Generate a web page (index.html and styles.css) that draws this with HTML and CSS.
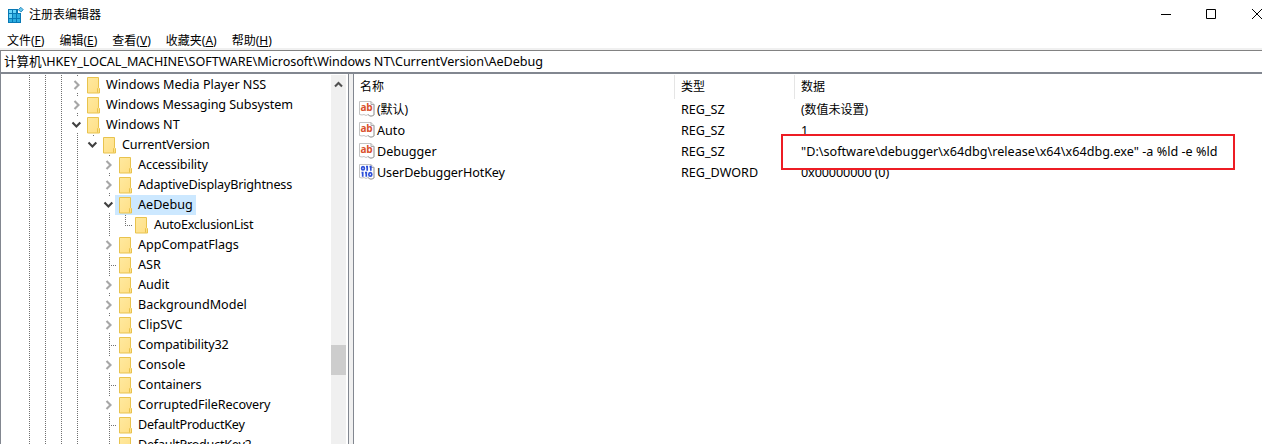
FILE: index.html
```html
<!DOCTYPE html>
<html lang="zh-CN">
<head>
<meta charset="utf-8">
<title>注册表编辑器</title>
<link rel="stylesheet" href="styles.css">
</head>
<body>
<svg width="0" height="0" class="defs">
  <defs>
    <linearGradient id="fg" x1="0" y1="0" x2="1" y2="1"><stop offset="0" stop-color="#ffe99f"/><stop offset="1" stop-color="#ffdf85"/></linearGradient>
    <symbol id="folder" viewBox="0 0 14 17"><path d="M.5.5h11v10l1 1v4.500h-12z" fill="url(#fg)" stroke="#e8c34e"/><path d="M10.500 15.500v-4l1-1" fill="none" stroke="#e8c34e"/></symbol>
    <symbol id="page" viewBox="0 0 16 16"><path d="M.5 13.500V.5h11.500l3 3v10.500l-2 1h-2l-2-1.500-2 1-2-1-2 .5z" fill="#fff" stroke="#c4c4c4"/><path d="M12 .5v3h3v10.500l-2 1h-2l-2-1.500" fill="none" stroke="#a8a8a8"/></symbol>
    <symbol id="ab" viewBox="0 0 16 16"><use href="#page"/><text x="1.600" y="10" class="ab-text">ab</text></symbol>
    <symbol id="bin" viewBox="0 0 16 16"><use href="#page"/><g fill="none" stroke="#2d4fd8" stroke-width="1.700"><ellipse cx="4" cy="4.300" rx="1.400" ry="1.700"/><path d="M7 2.700h1.200v4M10.500 2.700h1.300v4M2.500 8.700h1.200v4M6 8.700h1.300v4"/><ellipse cx="11.300" cy="10.400" rx="1.500" ry="1.700"/></g></symbol>
    <symbol id="right" viewBox="0 0 16 20"><path d="M5.500 6l4 4-4 4" fill="none" stroke="#a6a6a6" stroke-width="2.100"/></symbol>
    <symbol id="down" viewBox="0 0 16 20"><path d="M3.500 7.500l3.900 3.900 3.900-3.900" fill="none" stroke="#404040" stroke-width="2.100"/></symbol>
  </defs>
</svg>
<div class="window">
  <header class="titlebar">
    <svg class="app-icon" width="16" height="16" viewBox="0 0 16 16"><path d="M0 2h10v4h3v10H0z" fill="#0878b4"/><path d="M1 3h3v3H1zM5 3h3v3H5zM1 7h3v4H1z" fill="#6ad4f8"/><path d="M5 7h3v4H5zM1 12h3v3H1zM9 7h3v4H9zM5 12h3v3H5zM9 12h3v3H9z" fill="#2cacdf"/><path d="M12.800.3l2.400 2.400-2.400 2.400-2.400-2.400z" fill="#6cc8ee" stroke="#2589bd"/></svg>
    <span class="title">注册表编辑器</span>
    <svg class="controls" width="106" height="14" viewBox="0 0 106 14" fill="none" stroke="#000"><path d="M5 7.500h10M50.500 2.500h9v9h-9zM96 2l10 10M106 2L96 12"/></svg>
  </header>
  <nav class="menu"><span>文件(<u>F</u>)</span><span>编辑(<u>E</u>)</span><span>查看(<u>V</u>)</span><span>收藏夹(<u>A</u>)</span><span>帮助(<u>H</u>)</span></nav>
  <div class="address">计算机\HKEY_LOCAL_MACHINE\SOFTWARE\Microsoft\Windows NT\CurrentVersion\AeDebug</div>
  <main class="panes">
    <section class="tree-pane">
      <div class="tree" id="tree"></div>
      <div class="scrollbar"><svg width="15" height="20" viewBox="0 0 15 20"><path d="M4 11.500l3.500-3.500 3.500 3.500" fill="none" stroke="#505050" stroke-width="2.100"/></svg><div class="thumb"></div></div>
    </section>
    <div class="splitter"></div>
    <section class="values">
      <div class="row head"><span class="name">名称</span><span class="type">类型</span><span class="data">数据</span></div>
      <div class="row"><span class="name cjk"><svg><use href="#ab"/></svg>(默认)</span><span class="type">REG_SZ</span><span class="data cjk">(数值未设置)</span></div>
      <div class="row"><span class="name"><svg><use href="#ab"/></svg>Auto</span><span class="type">REG_SZ</span><span class="data">1</span></div>
      <div class="row"><span class="name"><svg><use href="#ab"/></svg>Debugger</span><span class="type">REG_SZ</span><span class="data marked"><b class="callout">"D:\software\debugger\x64dbg\release\x64\x64dbg.exe" -a %ld -e %ld</b></span></div>
      <div class="row"><span class="name tight"><svg><use href="#bin"/></svg>UserDebuggerHotKey</span><span class="type">REG_DWORD</span><span class="data tight">0x00000000 (0)</span></div>
    </section>
  </main>
</div>
<script src="tree.js"></script>
</body>
</html>
```
FILE: styles.css
```css
* { box-sizing: border-box; }
body { margin: 0; background: #fff; color: #000; font: 12.6px/20px "Noto Sans", "Noto Sans CJK SC", sans-serif; overflow: hidden; }
.defs { position: absolute; }
.ab-text { font: bold 10px "Open Sans", sans-serif; letter-spacing: -.3px; fill: #d9502c; }
.window { width: 1262px; height: 444px; display: flex; flex-direction: column; overflow: hidden; }
.titlebar { height: 31px; display: flex; align-items: center; padding-left: 8px; font-size: 12px; flex: none; }
.app-icon { margin-top: -2px; }
.title { margin-left: 5px; margin-top: -1px; }
.controls { margin-left: auto; margin-top: -3px; }
.menu { height: 17px; display: flex; gap: 15px; padding-left: 7px; line-height: 19px; font-size: 12px; flex: none; }
.address { height: 22px; flex: none; border-left: 1px solid #828790; border-top: 1px solid #828282; box-shadow: 0 -2px #f0f0f0; margin-top: 2px; padding-left: 3px; line-height: 21px; letter-spacing: -.05px; white-space: nowrap; }
.panes { flex: 1; display: flex; min-height: 0; border-top: 2px solid #828790; }
.tree-pane { width: 349px; display: flex; border-left: 1px solid #828790; border-right: 1px solid #828790; }
.tree { width: 330px; height: 370px; padding: 1px 0 0 20px; overflow: hidden; }
.scrollbar { width: 15px; background: #f0f0f0; margin-top: 1px; height: 370px; }
.scrollbar svg { display: block; }
.thumb { height: 30px; margin-top: 250px; background: #cdcdcd; }
.splitter { width: 4px; background: #f0f0f0; }
.values { flex: 1; border-left: 1px solid #828790; padding-top: 1px; }
.node { display: flex; height: 20px; white-space: nowrap; }
.cell { width: 16px; height: 20px; flex: none; }
.cell svg { display: block; width: 16px; height: 20px; }
.guide { background: repeating-linear-gradient(#707070 0 1px, transparent 1px 2px) 8px 0 / 1px 20px no-repeat; }
.label { display: flex; align-items: center; margin-left: -2px; padding: 0 4px; line-height: 18px; }
.label svg { width: 14px; height: 17px; margin-right: 5px; }
.selected { background: #cce8ff; padding-right: 3px; }
.row { display: flex; height: 21px; line-height: 22px; white-space: nowrap; }
.name { width: 320px; padding-left: 5px; display: flex; align-items: center; line-height: 20px; }
.name svg { width: 16px; height: 16px; margin-right: 2px; margin-top: -1px; }
.type { width: 120px; padding-left: 7px; }
.data { padding-left: 7px; }
.cjk { font-size: 12px; }
.tight { letter-spacing: -.1px; }
.head { height: 24px; line-height: 24px; font-size: 12px; }
.head .name { padding-left: 6px; line-height: 24px; }
.head .type, .head .data { border-left: 1px solid #e5e5e5; padding-left: 6px; }
.marked { position: relative; }
.callout { position: absolute; left: -13px; top: -7px; width: 454px; height: 36px; border: 2px solid #ed1c24; background: #fff; padding-left: 18px; line-height: 31px; font-weight: normal; letter-spacing: .025px; }
```
FILE: tree.js
```js
// [depth, label, state, letter spacing]: state is "right", "down", "leaf" or "last"
const nodes = [
  [0, "Windows Media Player NSS", "right"], [0, "Windows Messaging Subsystem", "right", -.07],
  [0, "Windows NT", "down"], [1, "CurrentVersion", "down", -.15],
  [2, "Accessibility", "right", -.1], [2, "AdaptiveDisplayBrightness", "right", -.18],
  [2, "AeDebug", "down"], [3, "AutoExclusionList", "last", -.26],
  [2, "AppCompatFlags", "right"], [2, "ASR", "leaf"], [2, "Audit", "right"],
  [2, "BackgroundModel", "right"], [2, "ClipSVC", "right"], [2, "Compatibility32", "leaf", -.15],
  [2, "Console", "right"], [2, "Containers", "leaf", -.1], [2, "CorruptedFileRecovery", "right", -.1],
  [2, "DefaultProductKey", "leaf", -.24], [2, "DefaultProductKey2", "leaf", -.24]
];
const dash = d => `<path d="${d}" stroke="#707070" stroke-dasharray="1 1" fill="none"/>`;
document.getElementById("tree").innerHTML = nodes.map(([depth, text, state, spacing = 0]) => {
  let cells = "";
  for (let i = 0; i < 3 + depth; i++) cells += `<span class="cell ${i === 4 ? "" : "guide"}"></span>`;
  let art;
  if (state === "leaf") art = dash("M8.5 0v20") + dash("M8 10.5h8");
  else if (state === "last") art = dash("M8.5 0v11") + dash("M8 10.5h8");
  else art = dash("M8.5 0v1") + (depth === 1 ? "" : dash("M8.5 18v1")) + `<use href="#${state}"/>`;
  return `<div class="node">${cells}<span class="cell"><svg viewBox="0 0 16 20">${art}</svg></span><span class="label ${text === "AeDebug" ? "selected" : ""}" style="letter-spacing:${spacing}px"><svg><use href="#folder"/></svg>${text}</span></div>`;
}).join("");
```
